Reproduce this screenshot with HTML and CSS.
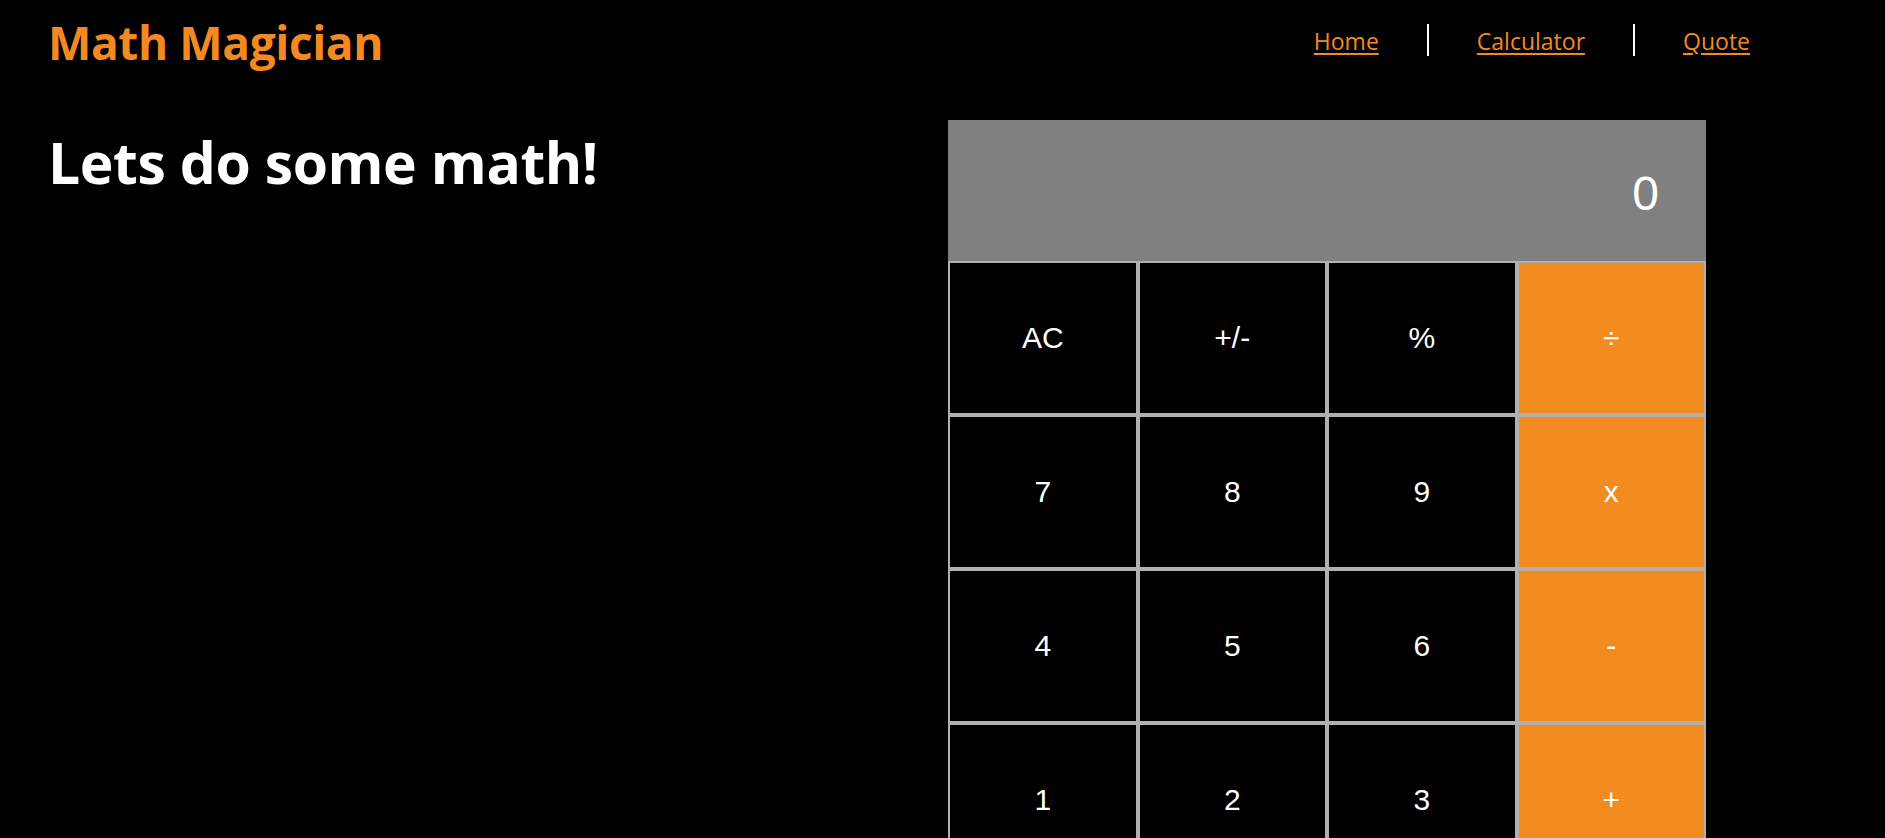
FILE: index.html
```html
<!DOCTYPE html>
<html lang="en">
<head>
<meta charset="utf-8">
<title>Math Magician</title>
<link rel="stylesheet" href="styles.css">
</head>
<body>
<header class="header">
  <h1 class="logo">Math Magician</h1>
  <nav>
    <ul class="nav-list">
      <li class="nav-item"><a class="nav-link" href="#">Home</a></li>
      <li class="nav-item"><a class="nav-link" href="#">Calculator</a></li>
      <li class="nav-item"><a class="nav-link" href="#">Quote</a></li>
    </ul>
  </nav>
</header>
<main class="main">
  <h2 class="intro">Lets do some math!</h2>
  <div class="calculator">
    <div class="screen">0</div>
    <div class="keys">
      <button class="key">AC</button>
      <button class="key">+/-</button>
      <button class="key">%</button>
      <button class="key op">÷</button>
      <button class="key">7</button>
      <button class="key">8</button>
      <button class="key">9</button>
      <button class="key op">x</button>
      <button class="key">4</button>
      <button class="key">5</button>
      <button class="key">6</button>
      <button class="key op">-</button>
      <button class="key">1</button>
      <button class="key">2</button>
      <button class="key">3</button>
      <button class="key op">+</button>
      <button class="key zero">0</button>
      <button class="key">.</button>
      <button class="key op">=</button>
    </div>
  </div>
</main>
</body>
</html>
```

FILE: styles.css
```css
* {
  box-sizing: border-box;
}

html, body {
  margin: 0;
  padding: 0;
  background: #000;
}

body {
  font-family: "Open Sans", "Noto Sans", sans-serif;
  color: #fff;
}

.header {
  height: 100px;
  display: flex;
  justify-content: space-between;
  align-items: flex-start;
  padding: 0 87px 0 48px;
}

.logo {
  margin: 19px 0 0;
  font-size: 46px;
  line-height: 1;
  font-weight: 700;
  color: #f28a21;
  letter-spacing: -0.4px;
}

.nav-list {
  list-style: none;
  margin: 24px 0 0;
  padding: 0;
  display: flex;
}

.nav-item {
  padding: 1px 48px 0;
  height: 32px;
  line-height: 32px;
  font-size: 23px;
  border-right: 2px solid #fff;
}

.nav-item:last-child {
  border-right: none;
}

.nav-link {
  color: #f28a21;
  text-decoration: underline;
  text-underline-offset: 3px;
  text-decoration-thickness: 2px;
}

.main {
  display: flex;
  justify-content: space-between;
  align-items: flex-start;
  padding: 20px 179px 0 48px;
}

.intro {
  margin: 14px 0 0;
  font-size: 57px;
  line-height: 1;
  font-weight: 700;
  letter-spacing: -0.4px;
}

.calculator {
  width: 758px;
  flex: none;
}

.screen {
  height: 141px;
  background: #808080;
  display: flex;
  align-items: center;
  justify-content: flex-end;
  padding: 6px 47px 0;
  font-family: "Liberation Sans", Arial, sans-serif;
  font-size: 48px;
  line-height: 1;
  color: #fff;
}

.keys {
  display: grid;
  grid-template-columns: repeat(4, 1fr);
}

.key {
  height: 154px;
  margin: 0;
  padding: 0;
  border: 2px solid #b3afaf;
  background: #000;
  color: #fff;
  font-family: "Liberation Sans", Arial, sans-serif;
  font-size: 30px;
  line-height: 1;
}

.key.op {
  background: #f28c20;
}

.key.zero {
  grid-column: span 2;
}
```
